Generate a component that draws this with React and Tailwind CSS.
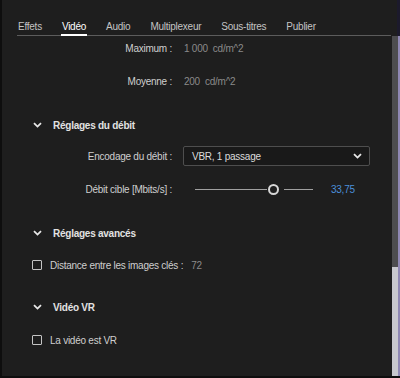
const tabs = ["Effets", "Vidéo", "Audio", "Multiplexeur", "Sous-titres", "Publier"];

const Chevron = ({ className = "" }) => (
  <svg width="9" height="6" viewBox="0 0 9 6" className={className}>
    <path d="M1 1.2 L4.5 4.6 L8 1.2" fill="none" stroke="#e8e8e8" strokeWidth="1.8" />
  </svg>
);

const Checkbox = () => (
  <span className="block h-[10px] w-[10px] shrink-0 rounded-[1px] border-[1.5px] border-[#c4c4c4]"></span>
);

const Section = ({ title, className = "" }) => (
  <div className={`flex h-[20px] items-center gap-[11px] pl-[31px] ${className}`}>
    <Chevron />
    <span className="font-semibold text-[#e2e2e2]">{title}</span>
  </div>
);

const Row = ({ label, children, className = "" }) => (
  <div className={`flex h-[20px] items-center ${className}`}>
    <span className="w-[170px] shrink-0 text-right text-[#cfcfcf]">{label}</span>
    <div className="ml-[11px] flex flex-1 items-center">{children}</div>
  </div>
);

export default function App() {
  return (
    <div
      className="flex h-[378px] w-[400px] overflow-hidden border-b-2 border-l-2 border-[#0e0e0e] bg-[#1e1e1e] text-[10px] tracking-[-0.25px]"
      style={{ fontFamily: '"Liberation Sans", Arial, sans-serif' }}
    >
      <div className="flex flex-1 flex-col">
        <div className="ml-[15px] mr-[1px] flex h-[36px] items-end gap-[18px] border-b border-[#5c5c5c] pt-[18px]">
          {tabs.map((t) => (
            <div
              key={t}
              className={`flex h-full items-center px-px ${
                t === "Vidéo"
                  ? "border-b-2 border-white mb-[-1px] text-white"
                  : "text-[#c4c4c4]"
              }`}
            >
              {t}
            </div>
          ))}
        </div>

        <Row label="Maximum :" className="mt-[2px]">
          <span className="pl-px text-[#8a8a8a]">1 000&nbsp; cd/m^2</span>
        </Row>
        <Row label="Moyenne :" className="mt-[13px]">
          <span className="pl-px text-[#8a8a8a]">200&nbsp; cd/m^2</span>
        </Row>

        <Section title="Réglages du débit" className="mt-[24px]" />

        <Row label="Encodage du débit :" className="mt-[11px]">
          <div className="flex h-[20px] w-[187px] items-center justify-between rounded-[2px] border border-[#4e4e4e] bg-[#191919] pl-[8px] pr-[7px] text-[#dcdcdc]">
            <span>VBR, 1 passage</span>
            <Chevron />
          </div>
        </Row>

        <Row label="Débit cible [Mbits/s] :" className="mt-[13px]">
          <div className="ml-[12px] flex items-center">
            <span className="block h-px w-[72px] bg-[#a0a0a0]"></span>
            <span className="mx-[1px] block h-[11px] w-[11px] rounded-full border-2 border-[#d6d6d6] bg-[#1e1e1e]"></span>
            <span className="ml-[4px] block h-px w-[29px] bg-[#a0a0a0]"></span>
            <span className="ml-[18px] text-[#4b8fda]">33,75</span>
          </div>
        </Row>

        <Section title="Réglages avancés" className="mt-[24px]" />

        <div className="mt-[12px] flex h-[20px] items-center gap-[8px] pl-[30px]">
          <Checkbox />
          <span className="text-[#cfcfcf]">Distance entre les images clés :</span>
          <span className="text-[#8a8a8a]">72</span>
        </div>

        <Section title="Vidéo VR" className="mt-[22px]" />

        <div className="mt-[13px] flex h-[20px] items-center gap-[8px] pl-[30px]">
          <Checkbox />
          <span className="text-[#cfcfcf]">La vidéo est VR</span>
        </div>
      </div>

      <div className="flex w-[8px] flex-col">
        <div className="flex h-[36px]">
          <div className="flex-1"></div>
          <div className="w-[3px] bg-[#1c1a2c]"></div>
        </div>
        <div className="flex flex-1">
          <div className="flex flex-1 flex-col">
            <div className="flex-1 bg-[#4d4d4f]"></div>
            <div className="h-[109px] bg-[#c8c8ce]"></div>
          </div>
          <div className="w-[2px] bg-[#8f88b4]"></div>
        </div>
      </div>
    </div>
  );
}
